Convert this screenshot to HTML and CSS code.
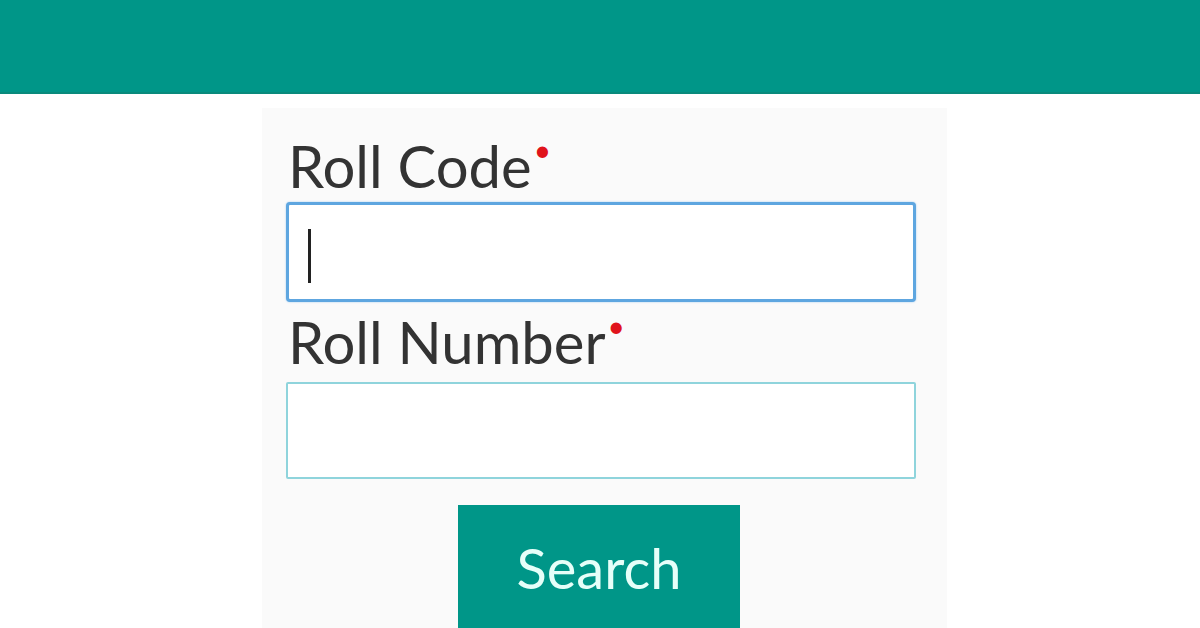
FILE: index.html
```html
<!DOCTYPE html>
<html>
<head>
<meta charset="utf-8">
<link rel="stylesheet" href="styles.css">
</head>
<body>
<header class="topbar"></header>
<main class="page">
  <form class="panel">
    <label class="label">Roll Code<span class="req">•</span></label>
    <div class="field-wrap">
      <input class="field field-focus" type="text">
      <span class="caret"></span>
    </div>
    <label class="label label-second">Roll Number<span class="req">•</span></label>
    <div class="field-wrap">
      <input class="field" type="text">
    </div>
    <div class="actions">
      <button class="btn" type="button">Search</button>
    </div>
  </form>
</main>
</body>
</html>
```

FILE: styles.css
```css
html, body {
  margin: 0;
  padding: 0;
  background: #ffffff;
  height: 628px;
  overflow: hidden;
}
body {
  font-family: Lato, "Open Sans", sans-serif;
}
.topbar {
  height: 92px;
  background: #009688;
  border-bottom: 2px solid #0a8a7c;
}
.page {
  display: flex;
  padding-left: 262px;
  padding-top: 14px;
}
.panel {
  width: 685px;
  box-sizing: border-box;
  background: #fafafa;
  padding: 22px 31px 0 24px;
  display: flex;
  flex-direction: column;
  height: 540px;
}
.label {
  font-size: 58px;
  line-height: 72px;
  color: #333333;
  padding-left: 2px;
  display: flex;
  align-items: flex-start;
}
.label-second {
  margin-top: 4px;
  padding-bottom: 4px;
}
.req {
  color: #e0131b;
  font-size: 30px;
  line-height: 30px;
  margin-left: 2px;
  margin-top: 4px;
}
.field-wrap {
  position: relative;
  display: flex;
}
.field {
  width: 100%;
  height: 97px;
  box-sizing: border-box;
  background: #ffffff;
  border: 2px solid #8fd4dc;
  border-radius: 2px;
  outline: none;
  margin: 0;
  font-size: 40px;
  padding: 0 20px;
}
.field-focus {
  height: 100px;
  border: 3px solid #5ea6e0;
  border-radius: 4px;
  box-shadow: 0 0 2px #9cc8ef;
}
.caret {
  position: absolute;
  left: 22px;
  top: 27px;
  width: 3px;
  height: 54px;
  background: #222222;
}
.actions {
  display: flex;
  padding-left: 172px;
  margin-top: 26px;
}
.btn {
  width: 282px;
  height: 140px;
  background: #009688;
  border: none;
  margin: 0;
  padding: 0 0 14px 0;
  color: #e6fff9;
  font-family: Lato, "Open Sans", sans-serif;
  font-size: 56px;
  line-height: 1;
  display: flex;
  align-items: center;
  justify-content: center;
}
```
